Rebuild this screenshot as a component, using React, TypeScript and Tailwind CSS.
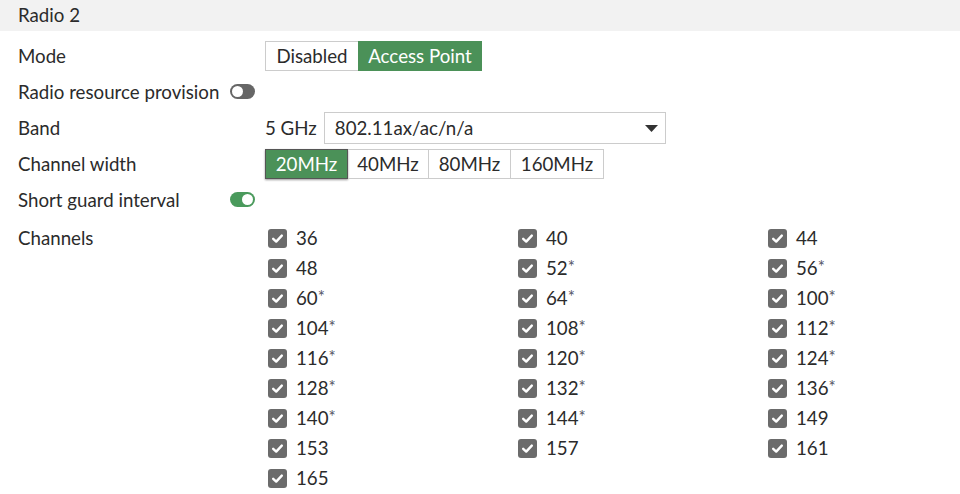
import React from "react";

const channels = [
  "36", "40", "44",
  "48", "52*", "56*",
  "60*", "64*", "100*",
  "104*", "108*", "112*",
  "116*", "120*", "124*",
  "128*", "132*", "136*",
  "140*", "144*", "149",
  "153", "157", "161",
  "165",
];

function Toggle({ on }: { on: boolean }) {
  return (
    <span
      className={
        on
          ? "inline-flex h-[15px] w-[25px] items-center justify-end rounded-full bg-[#4a9a5c] px-[2px]"
          : "inline-flex h-[15px] w-[25px] items-center justify-start rounded-full bg-[#666666] px-[2px]"
      }
    >
      <span className="h-[11px] w-[11px] rounded-full bg-white" />
    </span>
  );
}

function Check() {
  return (
    <span className="flex h-[19px] w-[19px] items-center justify-center rounded-[3px] bg-[#6b6b6b]">
      <svg width="13" height="13" viewBox="0 0 13 13">
        <path d="M2.2 6.8 L5.2 9.6 L10.8 3.6" fill="none" stroke="white" strokeWidth="2.4" strokeLinecap="round" strokeLinejoin="round" />
      </svg>
    </span>
  );
}

function Num({ v }: { v: string }) {
  const star = v.endsWith("*");
  const n = star ? v.slice(0, -1) : v;
  return (
    <span>
      {n}
      {star && <span className="relative top-[-2px] text-[17px] text-[#556]">*</span>}
    </span>
  );
}

export default function App() {
  return (
    <div className="w-[960px] h-[494px] overflow-hidden bg-white text-[#2b2b2b] text-[18.7px] leading-none" style={{ fontFamily: "Lato, 'Liberation Sans', sans-serif" }}>
      <div className="flex h-[31px] items-center bg-[#f2f2f2] pl-[18px]">Radio 2</div>
      <div className="pt-[7px]">
        <div className="flex h-[36px] items-center">
          <div className="w-[265px] pl-[18px]">Mode</div>
          <div className="flex h-[30px]">
            <div className="flex w-[93px] items-center justify-center border border-[#cccccc] border-r-0 bg-white">Disabled</div>
            <div className="flex w-[124px] items-center justify-center bg-[#4b9158] text-white">Access Point</div>
          </div>
        </div>
        <div className="flex h-[36px] items-center">
          <div className="flex w-[265px] items-center pl-[18px]">
            <span className="w-[212px]">Radio resource provision</span>
            <Toggle on={false} />
          </div>
        </div>
        <div className="flex h-[36px] items-center">
          <div className="w-[265px] pl-[18px]">Band</div>
          <span className="mr-[7px]">5 GHz</span>
          <div className="flex h-[32px] w-[342px] items-center justify-between border border-[#cccccc] pl-[10px] pr-[7px]">
            <span>802.11ax/ac/n/a</span>
            <svg width="13" height="7" viewBox="0 0 13 7"><path d="M0 0 H13 L6.5 7 Z" fill="#333" /></svg>
          </div>
        </div>
        <div className="flex h-[36px] items-center">
          <div className="w-[265px] pl-[18px]">Channel width</div>
          <div className="flex h-[30px]">
            <div className="flex w-[83px] items-center justify-center border border-[#555] bg-[#4b9158] text-white shadow-[0_1px_2px_rgba(0,0,0,0.4)]">20MHz</div>
            <div className="flex w-[81px] items-center justify-center border-y border-r border-[#cccccc]">40MHz</div>
            <div className="flex w-[82px] items-center justify-center border-y border-r border-[#cccccc]">80MHz</div>
            <div className="flex w-[93px] items-center justify-center border-y border-r border-[#cccccc]">160MHz</div>
          </div>
        </div>
        <div className="flex h-[36px] items-center">
          <div className="flex w-[265px] items-center pl-[18px]">
            <span className="w-[212px]">Short guard interval</span>
            <Toggle on={true} />
          </div>
        </div>
        <div className="flex pt-[5px]">
          <div className="flex h-[30px] w-[265px] items-center pl-[18px]">Channels</div>
          <div className="grid grid-cols-[250px_250px_180px] pl-[3px]">
            {channels.map((c) => (
              <div key={c} className="flex h-[30px] items-center gap-[9px]">
                <Check />
                <Num v={c} />
              </div>
            ))}
          </div>
        </div>
      </div>
    </div>
  );
}
